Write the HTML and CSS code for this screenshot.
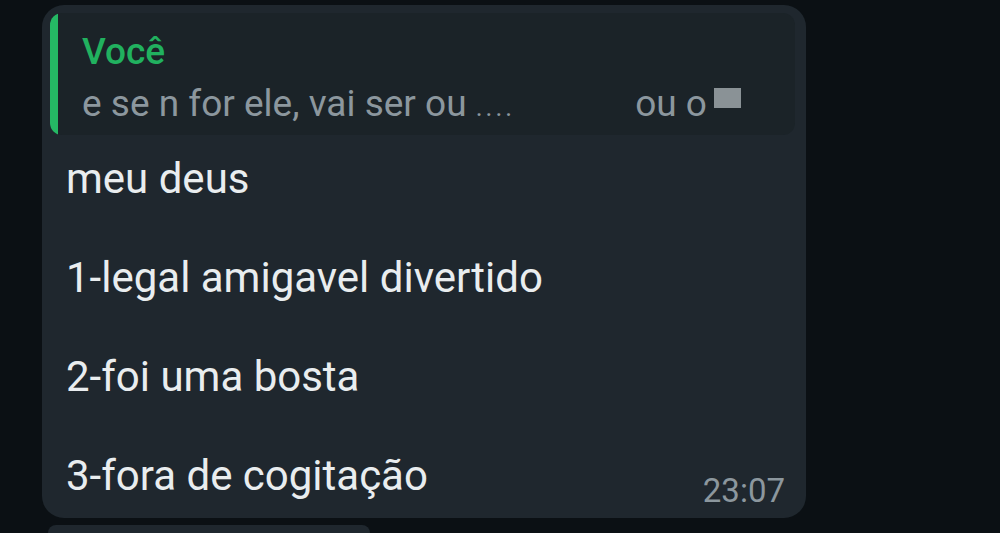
FILE: index.html
```html
<!DOCTYPE html>
<html lang="pt">
<head>
<meta charset="UTF-8">
<title>Conversa</title>
<link rel="stylesheet" href="styles.css">
</head>
<body>

<div class="chat">
  <div class="bubble">
    <div class="quote">
      <div class="quote-bar"></div>
      <div class="quote-body">
        <div class="quote-author">Você</div>
        <div class="quote-text">
          <span>e se n for ele, vai ser ou <span class="dots">....</span></span>
          <span class="hidden-name"></span>
          <span>ou o</span><span class="blur-box"></span>
        </div>
      </div>
    </div>
    <div class="msg">
      <p>meu deus</p>
      <p>1-legal amigavel divertido</p>
      <p>2-foi uma bosta</p>
      <div class="last-line">
        <p>3-fora de cogitação</p>
        <span class="time">23:07</span>
      </div>
    </div>
  </div>
  <div class="bubble-next"></div>
</div>

</body>
</html>
```

FILE: styles.css
```css
:root{
  --bg:#0b1014;
  --bubble:#1f272e;
  --quote:#1b2328;
  --green:#25b864;
  --muted:#8c979e;
  --text:#e9edef;
}
body{
  margin:0;
  background:var(--bg);
  font-family:Roboto, 'Liberation Sans', sans-serif;
  color:var(--text);
  overflow:hidden;
}
.chat{
  padding:5px 0 0 42px;
}
.bubble{
  width:764px;
  height:513px;
  box-sizing:border-box;
  background:var(--bubble);
  border-radius:22px;
  padding:8px 11px 0 8px;
}
.quote{
  display:flex;
  height:122px;
  background:var(--quote);
  border-radius:12px;
  overflow:hidden;
}
.quote-bar{
  width:8px;
  background:var(--green);
  border-radius:8px 0 0 8px;
}
.quote-body{padding:16px 0 0 24px;}
.quote-author{
  color:#21b15f;
  font-size:37px;
  font-weight:500;
  line-height:46px;
}
.quote-text{
  margin-top:6px;
  color:var(--muted);
  font-size:37px;
  line-height:46px;
  display:flex;
  align-items:baseline;
  white-space:pre;
}
.dots{font-size:26px;letter-spacing:3px;}
.hidden-name{display:inline-block;width:120px;}
.blur-box{
  display:inline-block;
  width:27px;
  height:20px;
  margin-left:7px;
  background:#8a9296;
  align-self:flex-start;
  margin-top:7px;
}
.msg{
  padding:19px 0 0 16px;
  font-size:42px;
  line-height:49.5px;
}
.msg p{margin:0 0 49.5px;}
.last-line{
  display:flex;
  justify-content:space-between;
  align-items:baseline;
  padding-right:10px;
}
.last-line p{margin:0;}
.time{
  font-size:33px;
  color:var(--muted);
  position:relative;
  top:12px;
}
.bubble-next{
  width:322px;
  height:8px;
  margin:7px 0 0 6px;
  background:var(--bubble);
  border-radius:22px 22px 0 0;
}
```
